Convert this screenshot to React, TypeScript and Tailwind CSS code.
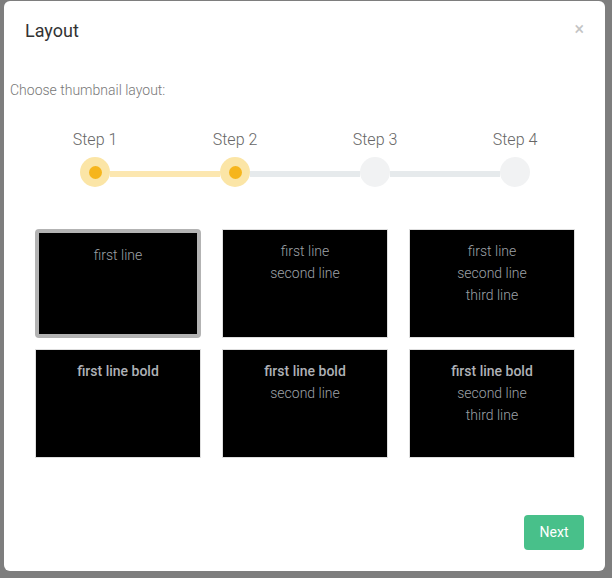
import React, { useState } from 'react';

const steps = ['Step 1', 'Step 2', 'Step 3', 'Step 4'];
const activeStep = 1;

const layouts = [
  { bold: false, lines: ['first line'] },
  { bold: false, lines: ['first line', 'second line'] },
  { bold: false, lines: ['first line', 'second line', 'third line'] },
  { bold: true, lines: ['first line bold'] },
  { bold: true, lines: ['first line bold', 'second line'] },
  { bold: true, lines: ['first line bold', 'second line', 'third line'] },
];

function StepDot({ done }: { done: boolean }) {
  if (!done) {
    return <div className="w-[30px] h-[30px] rounded-full bg-[#f1f2f3] shrink-0" />;
  }
  return (
    <div className="w-[30px] h-[30px] rounded-full bg-[#fbe5a6] shrink-0 flex items-center justify-center">
      <div className="w-[13px] h-[13px] rounded-full bg-[#f6b51c]" />
    </div>
  );
}

export default function App() {
  const [selected, setSelected] = useState(0);

  return (
    <div
      className="w-[612px] h-[578px] bg-[#7e7e7e] pt-px pl-1 overflow-hidden"
      style={{ fontFamily: 'Roboto, "Liberation Sans", sans-serif' }}
    >
      <div className="w-[601px] h-[570px] bg-white rounded-md flex flex-col">
        {/* header */}
        <div className="flex items-center justify-between pl-[21px] pr-[21px] pt-[17px]">
          <h4 className="text-[18px] leading-[26px] text-[#333]">Layout</h4>
          <button className="text-[18px] leading-none text-[#c4c4c4] -mt-1">×</button>
        </div>

        {/* body */}
        <div className="flex-1 flex flex-col">
          <p className="mt-[36px] pl-[6px] text-[14px] leading-5 font-light text-[#777]">
            Choose thumbnail layout:
          </p>

          {/* stepper */}
          <div className="ml-[21px] mt-[30px] w-[560px]">
            <div className="flex">
              {steps.map((s) => (
                <div key={s} className="w-[140px] text-center text-[16px] leading-5 font-light text-[#666]">
                  {s}
                </div>
              ))}
            </div>
            <div className="flex items-center mt-[7px] px-[55px]">
              {steps.map((s, i) => (
                <React.Fragment key={s}>
                  <StepDot done={i <= activeStep} />
                  {i < steps.length - 1 && (
                    <div
                      className={`flex-1 h-[6px] mt-[3px] ${
                        i < activeStep ? 'bg-[#fce7b0]' : 'bg-[#e6eaec]'
                      }`}
                    />
                  )}
                </React.Fragment>
              ))}
            </div>
          </div>

          {/* thumbnails */}
          <div className="grid grid-cols-[166px_166px_166px] gap-x-[21px] gap-y-[11px] ml-[31px] mt-[42px]">
            {layouts.map((l, i) => (
              <div
                key={i}
                onClick={() => setSelected(i)}
                className={`h-[109px] bg-black text-center text-[14px] leading-[22px] cursor-pointer ${
                  selected === i
                    ? 'border-4 border-[#b3b3b3] rounded-[4px] pt-[11px]'
                    : 'border border-[#dedede] pt-[10px]'
                }`}
              >
                {l.lines.map((line, j) => (
                  <div
                    key={j}
                    className={
                      l.bold && j === 0 ? 'font-medium text-[#aeb1b6]' : 'font-light text-[#9ea2a8]'
                    }
                  >
                    {line}
                  </div>
                ))}
              </div>
            ))}
          </div>
        </div>

        {/* footer */}
        <div className="flex justify-end pr-[21px] pb-[21px]">
          <button className="w-[60px] h-[35px] rounded-[4px] bg-[#48c08a] text-white text-[14px]">
            Next
          </button>
        </div>
      </div>
    </div>
  );
}
